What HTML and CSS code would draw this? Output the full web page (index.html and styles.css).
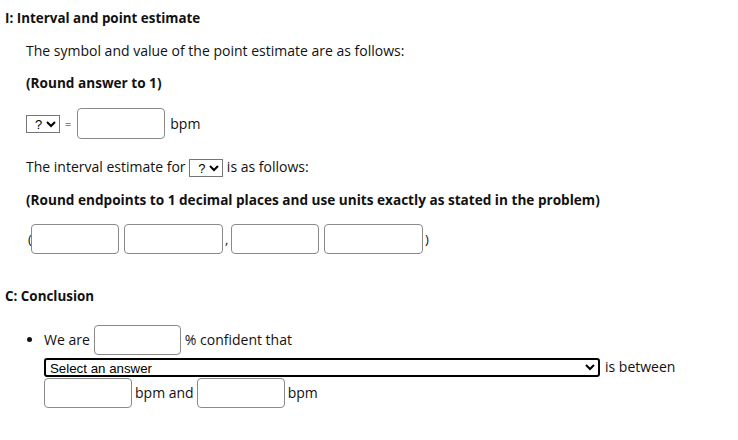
FILE: index.html
```html
<!DOCTYPE html>
<html>
<head>
<meta charset="utf-8">
<link rel="stylesheet" href="styles.css">
</head>
<body>
<div class="page">
  <h3 class="heading h-first">I: Interval and point estimate</h3>
  <div class="indent">
    <p class="line l1">The symbol and value of the point estimate are as follows:</p>
    <p class="line bold l2">(Round answer to 1)</p>
    <div class="row r1">
      <select class="mini"><option>?</option></select>
      <span class="eq">=</span>
      <input class="box" type="text">
      <span class="unit">bpm</span>
    </div>
    <p class="line l3">The interval estimate for <select class="mini inline"><option>?</option></select> is as follows:</p>
    <p class="line bold l4">(Round endpoints to 1 decimal places and use units exactly as stated in the problem)</p>
    <div class="row r2">
      <span class="paren">(</span>
      <input class="box" type="text">
      <input class="box wide" type="text">
      <span class="comma">,</span>
      <input class="box" type="text">
      <input class="box wide" type="text">
      <span class="paren">)</span>
    </div>
  </div>
  <h3 class="heading h-second">C: Conclusion</h3>
  <ul class="concl">
    <li>
      <div class="row r3">
        <span>We are</span>
        <input class="box" type="text">
        <span>% confident that</span>
      </div>
      <div class="row r4">
        <select class="answer"><option>Select an answer</option></select>
        <span>is between</span>
      </div>
      <div class="row r5">
        <input class="box" type="text">
        <span>bpm and</span>
        <input class="box" type="text">
        <span>bpm</span>
      </div>
    </li>
  </ul>
</div>
</body>
</html>
```
FILE: styles.css
```css
html, body {
  margin: 0;
  padding: 0;
  background: #fff;
}
body {
  font-family: "Open Sans", "DejaVu Sans", sans-serif;
  font-size: 14px;
  color: #111;
}
.page {
  padding: 8px 0 0 5px;
}
.heading {
  margin: 0;
  font-size: 13.4px;
  font-weight: bold;
  line-height: 20px;
}
.h-second {
  margin-top: 32px;
}
.indent {
  padding-left: 21px;
}
.line {
  margin: 0;
  line-height: 20px;
}
.bold {
  font-weight: bold;
  font-size: 13.6px;
}
.l1 { margin-top: 13px; }
.l2 { margin-top: 12px; }
.l3 { margin-top: 18px; }
.l4 { margin-top: 13px; }
.row {
  display: flex;
  align-items: center;
}
.r1 { margin-top: 15px; gap: 5px; }
.r1 .eq { margin-right: 1px; }
.r2 { margin-top: 14px; }
.box {
  box-sizing: border-box;
  width: 88px;
  height: 31px;
  border: 1px solid #8a8a8a;
  border-radius: 4px;
  padding: 0 4px;
  margin: 0;
  font: inherit;
}
.r2 .box { height: 30px; }
.r2 .wide { width: 99px; margin-left: 5px; }
.r2 .paren { margin-left: 2px; width: 3px; font-size: 13px; }
.r2 .comma { width: 8px; padding-left: 2px; box-sizing: border-box; font-size: 13px; }
.mini {
  box-sizing: border-box;
  font-family: "Liberation Sans", Arial, sans-serif;
  font-size: 13px;
  width: 34px;
  height: 18px;
  padding: 0 0 0 4px;
  border: 1px solid #767676;
  border-radius: 0;
  background: #fff;
  color: #000;
}
.inline {
  vertical-align: middle;
}
.eq { font-size: 11px; }
.concl {
  margin: 19px 0 0 0;
  padding-left: 39px;
}
.concl li {
  line-height: 20px;
}
.r3 { gap: 4px; }
.r3 .box { height: 30px; width: 87px; }
.r4 {
  margin-top: 2px;
  gap: 5px;
}
.answer {
  box-sizing: border-box;
  width: 556px;
  height: 19px;
  font-family: "Liberation Sans", Arial, sans-serif;
  font-size: 13.3px;
  border: 2px solid #000;
  border-radius: 3px;
  padding: 0;
  background: #fff;
  color: #000;
}
.r5 {
  margin-top: 1px;
  gap: 3px;
}
.r5 .box { height: 30px; }
```
